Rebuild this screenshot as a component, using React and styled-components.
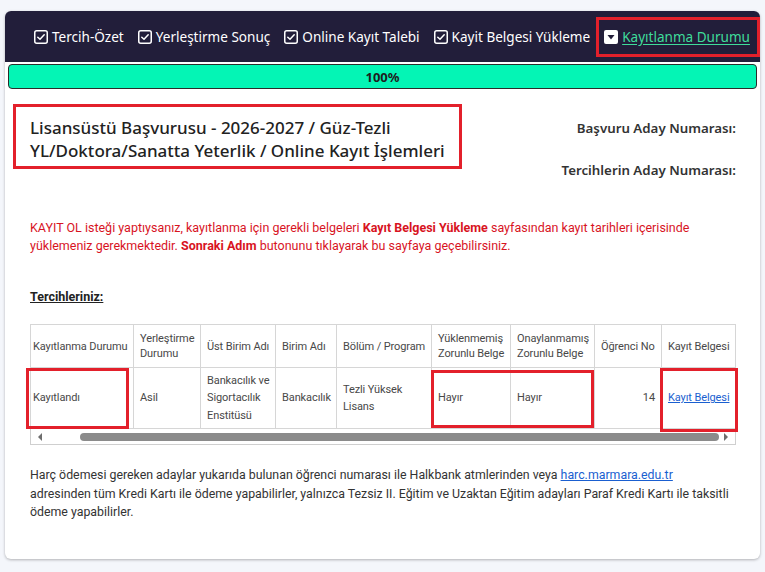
import React from 'react';
import styled, { createGlobalStyle } from 'styled-components';

const Global = createGlobalStyle`
  html, body { margin: 0; padding: 0; background: #f4f6fb; }
  body { font-family: "Noto Sans", "Open Sans", sans-serif; color: #222; }
`;

const Page = styled.div`
  padding: 11px 5px 14px 5px;
`;

const Card = styled.div`
  background: #fff;
  border-radius: 6px;
  box-shadow: 0 1px 3px rgba(0, 0, 0, 0.28);
  padding-bottom: 37px;
`;

const Header = styled.nav`
  background: #221e3a;
  border-radius: 6px 6px 0 0;
  height: 51px;
  display: flex;
  align-items: center;
  padding-left: 29px;
  gap: 14px;
`;

const NavItem = styled.a`
  display: flex;
  align-items: center;
  gap: 4px;
  font-size: 13.55px;
  color: ${p => (p.$active ? '#3fdc9b' : '#ffffff')};
  text-decoration: ${p => (p.$active ? 'underline' : 'none')};
  text-underline-offset: 2px;
  white-space: nowrap;
  ${p => p.$active && `
    border: 3px solid #e3202b;
    box-sizing: border-box;
    height: 40px;
    padding: 0 7px 0 5px;
    margin-left: -8px;
  `}
`;

const ProgressWrap = styled.div`
  padding: 2px 3px 0 3px;
`;

const Progress = styled.div`
  height: 25px;
  box-sizing: border-box;
  border: 1px solid #2b2b2b;
  border-radius: 4px;
  background: #04f5b5;
  display: flex;
  align-items: center;
  justify-content: center;
  font-size: 13px;
  font-weight: 700;
  color: #1e1e1e;
`;

const Content = styled.div`
  padding: 0 24px 0 25px;
`;

const TopRow = styled.div`
  display: flex;
  justify-content: space-between;
  align-items: flex-start;
  margin-top: 15px;
`;

const TitleBox = styled.h1`
  margin: 0 0 0 -17px;
  border: 3px solid #e3202b;
  padding: 9px 14px 4px 14px;
  font-size: 17px;
  font-weight: 500;
  line-height: 23px;
  color: #222;
`;

const AdayInfo = styled.div`
  padding-top: 14px;
  text-align: right;
  display: flex;
  flex-direction: column;
  gap: 22px;
`;

const AdayLine = styled.div`
  font-size: 13.3px;
  font-weight: 600;
  line-height: 20px;
  color: #333;
`;

const Notice = styled.p`
  margin: 39px 0 0 0;
  font-family: Roboto, "Noto Sans", sans-serif;
  font-size: 12.5px;
  line-height: 18px;
  color: #d8141f;
  white-space: nowrap;
`;

const Strong = styled.b`
  font-weight: 700;
`;

const SectionLabel = styled.div`
  margin-top: 33px;
  font-family: Roboto, "Noto Sans", sans-serif;
  font-size: 12.5px;
  line-height: 18px;
  font-weight: 700;
  text-decoration: underline;
  color: #222;
`;

const TableWrap = styled.div`
  margin-top: 18px;
  border: 1px solid #cfcfcf;
  width: 706px;
  box-sizing: border-box;
`;

const Table = styled.table`
  border-collapse: collapse;
  table-layout: fixed;
  width: 705px;
  margin: -1px 0 0 -1px;
  font-family: Roboto, "Noto Sans", sans-serif;
  font-size: 11px;
  letter-spacing: -0.1px;
  color: #484848;
`;

const Th = styled.th`
  border: 1px solid #d6d6d6;
  height: 42px;
  padding: 0 ${p => (p.$first ? '2px' : '6px')};
  text-align: left;
  font-weight: 400;
  line-height: 15px;
  vertical-align: middle;
  white-space: nowrap;
`;

const Td = styled.td`
  position: relative;
  border: 1px solid #d6d6d6;
  height: 60px;
  padding: 0 ${p => (p.$first ? '2px' : '6px')};
  text-align: ${p => (p.$right ? 'right' : 'left')};
  line-height: 17.5px;
  vertical-align: middle;
  white-space: nowrap;
`;

const Highlight = styled.span`
  position: absolute;
  box-sizing: border-box;
  border: 3px solid #e3202b;
  pointer-events: none;
`;

const CellLink = styled.a`
  color: #1a5fd0;
  text-decoration: underline;
`;

const ScrollBar = styled.div`
  height: 15px;
  display: flex;
  align-items: center;
`;

const Arrow = styled.span`
  width: 0;
  height: 0;
  border-top: 4px solid transparent;
  border-bottom: 4px solid transparent;
  ${p => (p.$dir === 'left'
    ? 'border-right: 4px solid #6e6e6e; margin: 0 0 0 7px;'
    : 'border-left: 4px solid #6e6e6e; margin: 0 7px 0 0;')}
`;

const Track = styled.div`
  flex: 1;
  padding: 0 5px 0 38px;
`;

const Thumb = styled.div`
  height: 8px;
  border-radius: 4px;
  background: #8b8b8b;
`;

const Footer = styled.p`
  margin: 21px 0 0 0;
  font-family: Roboto, "Noto Sans", sans-serif;
  font-size: 12.35px;
  line-height: 18.5px;
  color: #333;
  white-space: nowrap;
`;

const FooterLink = styled.a`
  color: #1a5fd0;
  text-decoration: underline;
`;

const CheckIcon = () => (
  <svg width="14" height="14" viewBox="0 0 14 14" fill="none">
    <rect x="0.75" y="0.75" width="12.5" height="12.5" rx="2" stroke="#fff" strokeWidth="1.5" />
    <path d="M3.8 7.2 L6 9.3 L10.2 4.8" stroke="#fff" strokeWidth="1.5" strokeLinecap="round" strokeLinejoin="round" />
  </svg>
);

const DropIcon = () => (
  <svg width="14" height="14" viewBox="0 0 14 14">
    <rect x="0" y="0" width="14" height="14" rx="2" fill="#fff" />
    <path d="M3.5 5 L10.5 5 L7 9.5 Z" fill="#221e3a" />
  </svg>
);

const navItems = ['Tercih-Özet', 'Yerleştirme Sonuç', 'Online Kayıt Talebi', 'Kayit Belgesi Yükleme'];

const cols = [103, 67, 75, 61, 95, 79, 84, 67, 74];

export default function App() {
  return (
    <>
      <Global />
      <Page>
        <Card>
          <Header>
            {navItems.map(t => (
              <NavItem key={t}>
                <CheckIcon />
                <span>{t}</span>
              </NavItem>
            ))}
            <NavItem $active>
              <DropIcon />
              <span>Kayıtlanma Durumu</span>
            </NavItem>
          </Header>
          <ProgressWrap>
            <Progress>100%</Progress>
          </ProgressWrap>
          <Content>
            <TopRow>
              <TitleBox>
                Lisansüstü Başvurusu - 2026-2027 / Güz-Tezli
                <br />
                YL/Doktora/Sanatta Yeterlik / Online Kayıt İşlemleri
              </TitleBox>
              <AdayInfo>
                <AdayLine>Başvuru Aday Numarası:</AdayLine>
                <AdayLine>Tercihlerin Aday Numarası:</AdayLine>
              </AdayInfo>
            </TopRow>
            <Notice>
              KAYIT OL isteği yaptıysanız, kayıtlanma için gerekli belgeleri <Strong>Kayıt Belgesi Yükleme</Strong> sayfasından kayıt tarihleri içerisinde
              <br />
              yüklemeniz gerekmektedir. <Strong>Sonraki Adım</Strong> butonunu tıklayarak bu sayfaya geçebilirsiniz.
            </Notice>
            <SectionLabel>Tercihleriniz:</SectionLabel>
            <TableWrap>
              <Table>
                <colgroup>
                  {cols.map((w, i) => (
                    <col key={i} style={{ width: w }} />
                  ))}
                </colgroup>
                <thead>
                  <tr>
                    <Th $first>Kayıtlanma Durumu</Th>
                    <Th>Yerleştirme<br />Durumu</Th>
                    <Th>Üst Birim Adı</Th>
                    <Th>Birim Adı</Th>
                    <Th>Bölüm / Program</Th>
                    <Th>Yüklenmemiş<br />Zorunlu Belge</Th>
                    <Th>Onaylanmamış<br />Zorunlu Belge</Th>
                    <Th>Öğrenci No</Th>
                    <Th>Kayıt Belgesi</Th>
                  </tr>
                </thead>
                <tbody>
                  <tr>
                    <Td $first>
                      Kayıtlandı
                      <Highlight style={{ left: -5, top: 0, width: 103, height: 61 }} />
                    </Td>
                    <Td>Asil</Td>
                    <Td>Bankacılık ve<br />Sigortacılık<br />Enstitüsü</Td>
                    <Td>Bankacılık</Td>
                    <Td>Tezli Yüksek<br />Lisans</Td>
                    <Td>
                      Hayır
                      <Highlight style={{ left: -1, top: 2, width: 163, height: 58 }} />
                    </Td>
                    <Td>Hayır</Td>
                    <Td $right>14</Td>
                    <Td>
                      <CellLink href="#">Kayıt Belgesi</CellLink>
                      <Highlight style={{ left: -2, top: 0, width: 78, height: 64 }} />
                    </Td>
                  </tr>
                </tbody>
              </Table>
              <ScrollBar>
                <Arrow $dir="left" />
                <Track>
                  <Thumb />
                </Track>
                <Arrow $dir="right" />
              </ScrollBar>
            </TableWrap>
            <Footer>
              Harç ödemesi gereken adaylar yukarıda bulunan öğrenci numarası ile Halkbank atmlerinden veya <FooterLink href="#">harc.marmara.edu.tr</FooterLink>
              <br />
              adresinden tüm Kredi Kartı ile ödeme yapabilirler, yalnızca Tezsiz II. Eğitim ve Uzaktan Eğitim adayları Paraf Kredi Kartı ile taksitli
              <br />
              ödeme yapabilirler.
            </Footer>
          </Content>
        </Card>
      </Page>
    </>
  );
}
